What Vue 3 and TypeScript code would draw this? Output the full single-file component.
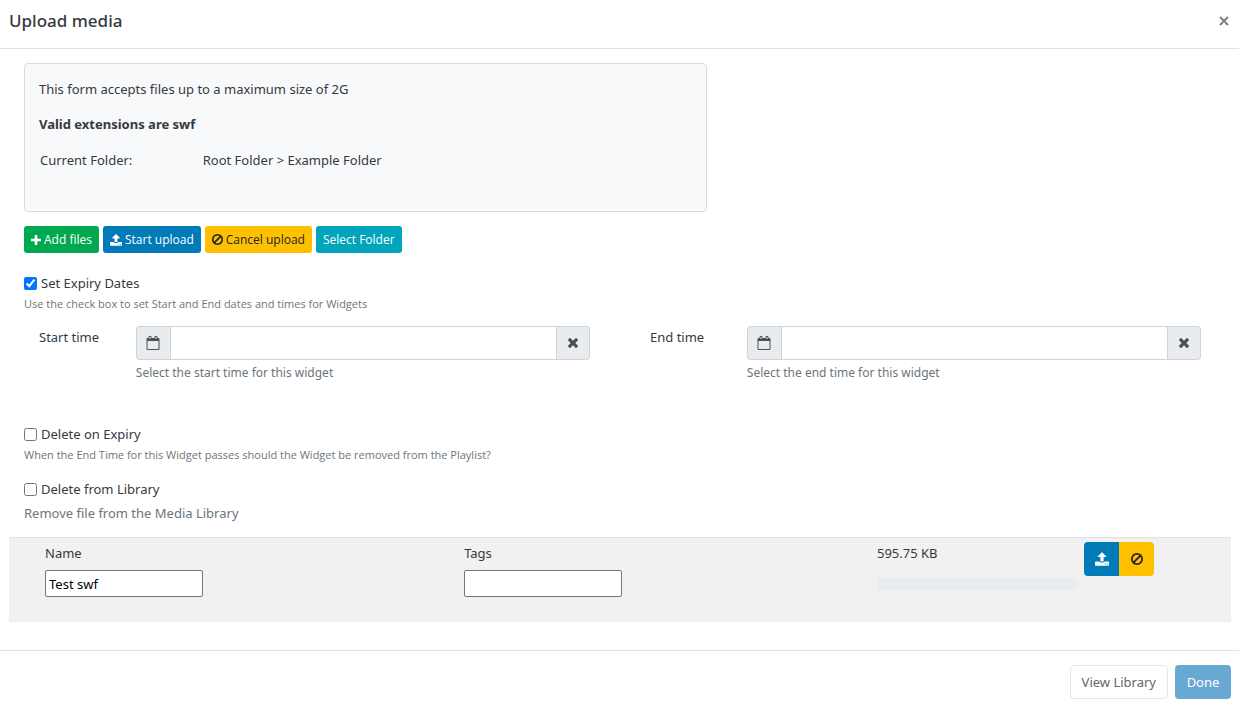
<script setup lang="ts">
import { reactive, ref } from 'vue'

interface TimeField {
  id: string
  label: string
  help: string
  value: string
}

interface QueuedFile {
  name: string
  tags: string
  size: string
  progress: number
}

const setExpiry = ref(true)
const deleteOnExpiry = ref(false)
const deleteFromLibrary = ref(false)

const times = reactive<TimeField[]>([
  { id: 'start-time', label: 'Start time', help: 'Select the start time for this widget', value: '' },
  { id: 'end-time', label: 'End time', help: 'Select the end time for this widget', value: '' },
])

const files = reactive<QueuedFile[]>([{ name: 'Test swf', tags: '', size: '595.75 KB', progress: 0 }])
</script>

<template>
  <svg class="defs" aria-hidden="true">
    <symbol id="icon-upload" viewBox="0 -65 1664 1601">
      <path
        d="M1280 1344q0-26-19-45t-45-19-45 19-19 45 19 45 45 19 45-19 19-45zm256 0q0-26-19-45t-45-19-45 19-19 45 19 45 45 19 45-19 19-45zm128-224v320q0 40-28 68t-68 28H96q-40 0-68-28t-28-68v-320q0-40 28-68t68-28h427q21 56 70.500 92t110.500 36h256q61 0 110.500-36t70.500-92h427q40 0 68 28t28 68zm-325-648q-17 40-59 40h-256v448q0 26-19 45t-45 19H704q-26 0-45-19t-19-45V512H384q-42 0-59-40-17-39 14-69L787-45q18-19 45-19t45 19l448 448q31 30 14 69z"
      />
    </symbol>
    <symbol id="icon-ban" viewBox="0 -3 1536 1542">
      <path
        d="M1312 767q0-161-87-295L471 1225q137 89 297 89 111 0 211.500-43.500T1153 1154t116-174.500T1312 767zM313 1064l755-754q-135-91-300-91-148 0-273 73T297 491t-73 276q0 162 89 297zM1536 767q0 157-61 300t-163.500 246-245 164-298.500 61-298.500-61-245-164T61 1067 0 767t61-299.500T224.500 222t245-164T768-3t298.500 61 245 164T1475 467.500t61 299.500z"
      />
    </symbol>
    <symbol id="icon-plus" viewBox="0 0 1408 1408">
      <path
        d="M1408 608v192q0 40-28 68t-68 28H896v416q0 40-28 68t-68 28H608q-40 0-68-28t-28-68V896H96q-40 0-68-28T0 800V608q0-40 28-68t68-28h416V96q0-40 28-68t68-28h192q40 0 68 28t28 68v416h416q40 0 68 28t28 68z"
      />
    </symbol>
    <symbol id="icon-times" viewBox="0 0 1188 1188">
      <path
        d="M1188 956q0 40-28 68l-136 136q-28 28-68 28t-68-28L594 866l-294 294q-28 28-68 28t-68-28L28 1024Q0 996 0 956t28-68l294-294L28 300Q0 272 0 232t28-68L164 28q28-28 68-28t68 28l294 294L888 28q28-28 68-28t68 28l136 136q28 28 28 68t-28 68L866 594l294 294q28 28 28 68z"
      />
    </symbol>
    <symbol id="icon-calendar" viewBox="0 0 14 14">
      <path
        d="M3.500 0h1a1 1 0 0 1 1 1v1h3V1a1 1 0 0 1 1-1h1a1 1 0 0 1 1 1v1h1a1 1 0 0 1 1 1v10a1 1 0 0 1-1 1h-11a1 1 0 0 1-1-1V3a1 1 0 0 1 1-1h1V1a1 1 0 0 1 1-1zM1.500 5v8h11V5zM3.500 1v2h1V1zM9.500 1v2h1V1z"
        fill-rule="evenodd"
      />
    </symbol>
  </svg>

  <div class="dialog" role="dialog" aria-labelledby="dialog-title">
    <header class="header">
      <h1 id="dialog-title">Upload media</h1>
      <button class="close" type="button" aria-label="Close">
        <svg viewBox="0 0 10 10"><path d="M1 1l8 8M9 1l-8 8" stroke="currentColor" stroke-width="2" /></svg>
      </button>
    </header>

    <main class="body">
      <section class="info-col">
        <div class="info">
          <p>This form accepts files up to a maximum size of 2G</p>
          <p><strong>Valid extensions are swf</strong></p>
          <div class="folder">
            <span>Current Folder:</span>
            <span>Root Folder &gt; Example Folder</span>
          </div>
        </div>
      </section>

      <div class="toolbar">
        <button class="btn small green" type="button"><svg class="plus"><use href="#icon-plus" /></svg>Add files</button>
        <button class="btn small blue" type="button"><svg class="upload"><use href="#icon-upload" /></svg>Start upload</button>
        <button class="btn small yellow" type="button"><svg class="ban"><use href="#icon-ban" /></svg>Cancel upload</button>
        <button class="btn small teal" type="button">Select Folder</button>
      </div>

      <div class="option expiry">
        <label><input v-model="setExpiry" type="checkbox" />Set Expiry Dates</label>
        <small>Use the check box to set Start and End dates and times for Widgets</small>
      </div>

      <div class="times">
        <div v-for="field in times" :key="field.id" class="time">
          <label :for="field.id">{{ field.label }}</label>
          <div class="control">
            <div class="group">
              <span class="addon"><svg class="calendar"><use href="#icon-calendar" /></svg></span>
              <input :id="field.id" v-model="field.value" type="text" />
              <button class="addon clear" type="button" :aria-label="'Clear ' + field.label" @click="field.value = ''">
                <svg class="times-icon"><use href="#icon-times" /></svg>
              </button>
            </div>
            <span class="help">{{ field.help }}</span>
          </div>
        </div>
      </div>

      <div class="option">
        <label><input v-model="deleteOnExpiry" type="checkbox" />Delete on Expiry</label>
        <small>When the End Time for this Widget passes should the Widget be removed from the Playlist?</small>
      </div>
      <div class="option">
        <label><input v-model="deleteFromLibrary" type="checkbox" />Delete from Library</label>
        <span class="note">Remove file from the Media Library</span>
      </div>

      <table class="files">
        <colgroup>
          <col class="c-preview" />
          <col class="c-name" />
          <col />
          <col class="c-size" />
          <col class="c-actions" />
        </colgroup>
        <tbody>
          <tr v-for="(file, i) in files" :key="i">
            <td></td>
            <td>
              <label :for="'name-' + i">Name</label>
              <input :id="'name-' + i" v-model="file.name" type="text" />
            </td>
            <td>
              <label :for="'tags-' + i">Tags</label>
              <input :id="'tags-' + i" v-model="file.tags" type="text" />
            </td>
            <td>
              <p class="size">{{ file.size }}</p>
              <div class="progress" role="progressbar" :aria-valuenow="file.progress">
                <div class="bar" :style="{ width: file.progress + '%' }"></div>
              </div>
            </td>
            <td>
              <div class="actions">
                <button class="btn blue" type="button" aria-label="Start upload"><svg class="upload"><use href="#icon-upload" /></svg></button>
                <button class="btn yellow" type="button" aria-label="Cancel upload"><svg class="ban"><use href="#icon-ban" /></svg></button>
              </div>
            </td>
          </tr>
        </tbody>
      </table>
    </main>

    <footer class="footer">
      <button class="btn white" type="button">View Library</button>
      <button class="btn done" type="button">Done</button>
    </footer>
  </div>
</template>

<style>
body {
  margin: 0;
  background: #fff;
}
</style>

<style scoped>
* {
  box-sizing: border-box;
}
.defs {
  position: absolute;
  width: 0;
  height: 0;
}
.dialog,
button,
input {
  font-family: 'Segoe UI', 'Noto Sans', 'Open Sans', sans-serif;
  font-size: 13px;
  line-height: 20px;
}
.dialog {
  color: #343a40;
}
svg {
  fill: currentColor;
}
.header {
  display: flex;
  justify-content: space-between;
  align-items: flex-start;
  padding: 8px 10px 14px 9px;
  border-bottom: 1px solid #dee2e6;
}
h1 {
  margin: 0;
  font-size: 17px;
  font-weight: 500;
  line-height: 26px;
}
.close {
  display: flex;
  padding: 8px 0;
  border: 0;
  background: none;
  color: #7f7f7f;
}
.close svg {
  width: 10px;
  height: 10px;
}
.body {
  padding: 14px 8px 28px 9px;
}
.info-col {
  width: 58.333%;
  padding: 0 15px;
}
.info {
  height: 149px;
  padding: 15px 14px;
  border: 1px solid #d9dbdd;
  border-radius: 4px;
  background: #f8f9fb;
}
.info p {
  margin: 0 0 15px;
}
.folder {
  display: grid;
  grid-template-columns: 25% 1fr;
  padding: 1px;
}
.toolbar {
  display: flex;
  gap: 4px;
  padding: 14px 15px 20px;
}
.btn {
  display: inline-flex;
  align-items: center;
  justify-content: center;
  height: 34px;
  padding: 0 11px;
  border: 0;
  border-radius: 4px;
  color: #fff;
}
.small {
  gap: 3px;
  height: 27px;
  padding: 0 7px;
  border-radius: 3px;
  font-family: 'Segoe UI', 'Open Sans', sans-serif;
  font-size: 12px;
  font-weight: 500;
}
.plus {
  width: 10px;
  height: 10px;
}
.upload {
  width: 12px;
  height: 12px;
}
.ban {
  width: 11px;
  height: 11px;
}
.green {
  background: #00a94f;
}
.blue {
  background: #007bb8;
}
.yellow {
  background: #ffc000;
  color: #212529;
  font-weight: 400;
}
.teal {
  background: #00a5bb;
}
.option {
  padding: 0 15px 14px;
}
.expiry {
  padding-bottom: 12px;
}
.option label {
  display: flex;
  align-items: center;
  gap: 4px;
  line-height: 21px;
}
.option input {
  width: 13px;
  height: 13px;
  margin: 0;
}
.option small,
.option .note {
  display: block;
  color: #6c757d;
}
.option small {
  font-family: 'Segoe UI', 'Open Sans', sans-serif;
  font-size: 11px;
}
.option .note {
  padding-top: 3px;
}
.times {
  display: grid;
  grid-template-columns: 1fr 1fr;
  padding-bottom: 41px;
}
.time {
  display: grid;
  grid-template-columns: 1fr 5fr;
  padding: 0 15px;
}
.time > label {
  padding: 1px 0 0 15px;
  white-space: nowrap;
}
.control {
  min-width: 0;
  padding: 0 15px;
}
.group {
  display: flex;
  height: 34px;
}
.group input {
  flex: 1;
  min-width: 0;
  padding: 0 10px;
  border: 1px solid #ced4da;
  border-radius: 0;
  outline: 0;
}
.addon {
  display: flex;
  align-items: center;
  justify-content: center;
  width: 34px;
  padding: 0;
  border: 1px solid #ced4da;
  border-right: 0;
  border-radius: 4px 0 0 4px;
  background: #e9ecef;
  color: #495057;
}
.clear {
  width: 33px;
  border-right: 1px solid #ced4da;
  border-left: 0;
  border-radius: 0 4px 4px 0;
}
.calendar {
  width: 14px;
  height: 14px;
}
.times-icon {
  width: 10px;
  height: 10px;
}
.help {
  display: block;
  padding-top: 3px;
  color: #6c757d;
  font-size: 12px;
}
.files {
  width: 100%;
  table-layout: fixed;
  border-collapse: collapse;
}
.c-preview {
  width: 32px;
}
.c-name {
  width: 34.3%;
}
.c-size {
  width: 207px;
}
.c-actions {
  width: 151px;
}
.files td {
  height: 84px;
  padding: 4px;
  border-top: 1px solid #dee2e6;
  background: #f1f1f1;
  vertical-align: top;
}
.files td label {
  display: block;
  padding: 1px 0 7px;
}
.files input {
  display: block;
  width: 158px;
  height: 27px;
  padding: 0 3px;
  border: 1px solid #767676;
  border-radius: 2px;
  background: #fff;
  color: #000;
}
.size {
  margin: 1px 0 14px;
}
.progress {
  height: 14px;
  overflow: hidden;
  border-radius: 4px;
  background: #e9ecef;
}
.bar {
  height: 100%;
  background: #007bb8;
}
.actions {
  display: flex;
}
.actions .btn {
  width: 35px;
  padding: 0;
}
.actions .upload {
  width: 14px;
  height: 14px;
}
.actions .ban {
  width: 12px;
  height: 12px;
}
.actions .blue {
  border-radius: 4px 0 0 4px;
}
.actions .yellow {
  border-radius: 0 4px 4px 0;
}
.footer {
  display: flex;
  justify-content: flex-end;
  gap: 7px;
  padding: 14px 8px 10px;
  border-top: 1px solid #dee2e6;
}
.white {
  border: 1px solid #e4e7ea;
  background: #fff;
  color: #666;
}
.done {
  min-width: 56px;
  background: #68a9d3;
}
</style>
